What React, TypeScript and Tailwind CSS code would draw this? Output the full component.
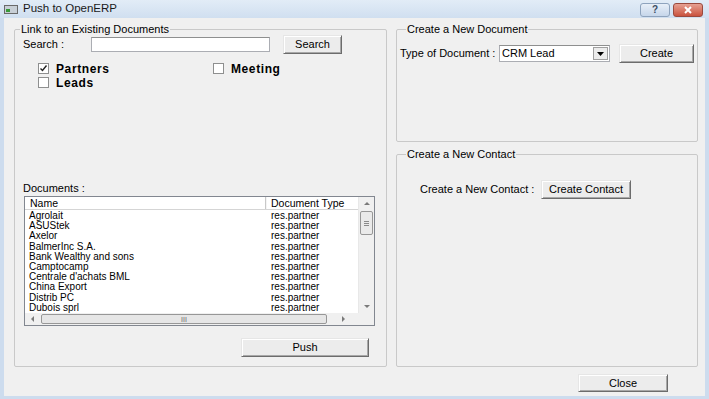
const FONT = "font-['Liberation_Sans',Arial,sans-serif]";

const ROWS = [
  "Agrolait",
  "ASUStek",
  "Axelor",
  "BalmerInc S.A.",
  "Bank Wealthy and sons",
  "Camptocamp",
  "Centrale d'achats BML",
  "China Export",
  "Distrib PC",
  "Dubois sprl",
];

// classic raised push button
function Btn({ w, h, children }: { w: string; h: string; children: React.ReactNode }) {
  return (
    <div
      className={`${w} ${h} flex items-center justify-center bg-[#ececec] border border-t-[#e6e6e6] border-l-[#e6e6e6] border-r-[#6c6c6c] border-b-[#6c6c6c] shadow-[inset_1px_1px_0_#ffffff,inset_-1px_-1px_0_#a8a8a8] text-[11px] text-black`}
    >
      {children}
    </div>
  );
}

function Check({ checked }: { checked?: boolean }) {
  return (
    <div className="w-[11px] h-[11px] border border-[#8e8f8f] bg-white flex items-center justify-center">
      {checked && (
        <svg width="9" height="9" viewBox="0 0 9 9">
          <path d="M1.5 4.5 L3.5 6.5 L7.5 1.5" stroke="#222" strokeWidth="1.4" fill="none" />
        </svg>
      )}
    </div>
  );
}

function Arrow({ dir }: { dir: "up" | "down" | "left" | "right" }) {
  const d = {
    up: "M1 5 L4 2 L7 5 Z",
    down: "M1 2 L4 5 L7 2 Z",
    left: "M5 1 L2 4 L5 7 Z",
    right: "M3 1 L6 4 L3 7 Z",
  }[dir];
  return (
    <svg width="8" height="8" viewBox="0 0 8 8">
      <path d={d} fill="#7a7a7a" />
    </svg>
  );
}

function DocumentList() {
  return (
    <div className="ml-[9px] mt-[2px] w-[351px] h-[130px] border border-[#828790] bg-white flex flex-col">
      <div className="flex flex-1 min-h-0">
        <div className="flex-1 flex flex-col">
          {/* header */}
          <div className="h-[13px] flex border-b border-[#d5d5d5] text-[10.5px] leading-[12px]">
            <div className="w-[241px] pl-[5px] border-r border-[#c8c8c8]">Name</div>
            <div className="pl-[4px] border-l border-[#f4f4f4]">Document Type</div>
          </div>
          <div className="flex flex-col pt-[1px]">
            {ROWS.map((name) => (
              <div key={name} className="h-[10.2px] flex text-[10px] leading-[10px]">
                <div className="w-[242px] pl-[4px]">{name}</div>
                <div className="pl-[4px]">res.partner</div>
              </div>
            ))}
          </div>
        </div>
        {/* vertical scrollbar */}
        <div className="w-[16px] bg-[#f0f0f0] flex flex-col items-center border-l border-[#e8e8e8]">
          <div className="h-[13px] flex items-center justify-center">
            <Arrow dir="up" />
          </div>
          <div className="mt-[1px] w-[13px] h-[24px] rounded-[2px] border border-[#979797] bg-[#eaeaea] flex flex-col items-center justify-center gap-[1px]">
            <div className="w-[5px] h-px bg-[#8a8a8a]" />
            <div className="w-[5px] h-px bg-[#8a8a8a]" />
            <div className="w-[5px] h-px bg-[#8a8a8a]" />
          </div>
          <div className="flex-1" />
          <div className="h-[13px] flex items-center justify-center">
            <Arrow dir="down" />
          </div>
        </div>
      </div>
      {/* horizontal scrollbar */}
      <div className="h-[12px] flex bg-[#f0f0f0]">
        <div className="w-[16px] flex items-center justify-center">
          <Arrow dir="left" />
        </div>
        <div className="w-[286px] my-[1px] rounded-[2px] border border-[#979797] bg-[#e6e6e6] flex items-center justify-center text-[7px] leading-none text-[#666]">
          III
        </div>
        <div className="flex-1 flex items-center justify-center">
          <Arrow dir="right" />
        </div>
        <div className="w-[16px] bg-[#f0f0f0]" />
      </div>
    </div>
  );
}

export default function App() {
  return (
    <div className={`${FONT} w-[709px] h-[399px] bg-[#cddcee] flex flex-col text-black overflow-hidden`}>
      {/* title bar */}
      <div className="h-[18px] flex items-center bg-gradient-to-b from-[#e2ecf7] to-[#d0dff0]">
        <div className="ml-[4px] w-[14px] h-[9px] border border-[#6a6a6a] bg-[#c8cfd6] flex items-end">
          <div className="ml-[1px] mb-[1px] w-[4px] h-[3px] bg-[#3a9a3a]" />
        </div>
        <div className="ml-[5px] text-[11.5px] leading-none text-[#1a1a1a]">Push to OpenERP</div>
        <div className="flex-1" />
        <div className="w-[30px] h-[14px] mt-[2px] rounded-[3px] border border-[#8ea3bd] bg-gradient-to-b from-[#e8eff8] to-[#c6d6ea] flex items-center justify-center text-[10px] leading-none font-bold text-[#3c4d63]">
          ?
        </div>
        <div className="ml-[3px] mr-[6px] w-[30px] h-[14px] mt-[2px] rounded-[3px] border border-[#9a4a3e] bg-gradient-to-b from-[#e6a092] to-[#c9523e] flex items-center justify-center">
          <svg width="10" height="8" viewBox="0 0 10 8">
            <path d="M2 1 L8 7 M8 1 L2 7" stroke="#ffffff" strokeWidth="2" />
          </svg>
        </div>
      </div>

      {/* client area */}
      <div className="flex-1 ml-[4px] mr-[4px] mb-[3px] bg-[#f0f0f0] flex flex-col text-[11px]">
        <div className="flex pl-[10px] pt-[5px] gap-[9px]">
          {/* left group */}
          <fieldset className="w-[373px] h-[344px] border border-[#c9c9c9] rounded-[2px] flex flex-col">
            <legend className="ml-[5px] px-[1px] h-[12px] leading-[12px] text-[11px]">Link to an Existing Documents</legend>
            <div className="flex items-center h-[19px]">
              <span className="ml-[8px] w-[68px]">Search :</span>
              <div className="w-[179px] h-[15px] border border-[#abadb3] border-t-[#8e8f8f] bg-white" />
              <div className="ml-[13px]">
                <Btn w="w-[59px]" h="h-[19px]">Search</Btn>
              </div>
            </div>
            <div className="mt-[9px] ml-[23px] grid grid-cols-[175px_auto] gap-y-[3px]">
              <div className="flex items-center gap-[7px] h-[11px]">
                <Check checked />
                <span className="font-bold text-[12px] tracking-[0.6px]">Partners</span>
              </div>
              <div className="flex items-center gap-[7px] h-[11px]">
                <Check />
                <span className="font-bold text-[12px] tracking-[0.6px]">Meeting</span>
              </div>
              <div className="flex items-center gap-[7px] h-[11px]">
                <Check />
                <span className="font-bold text-[12px] tracking-[0.6px]">Leads</span>
              </div>
            </div>
            <div className="mt-[94px] ml-[8px] h-[12px] leading-[12px]">Documents :</div>
            <DocumentList />
            <div className="mt-[12px] ml-[226px]">
              <Btn w="w-[128px]" h="h-[19px]">Push</Btn>
            </div>
          </fieldset>

          {/* right column */}
          <div className="w-[302px] flex flex-col gap-[6px]">
            <fieldset className="h-[119px] border border-[#c9c9c9] rounded-[2px] flex flex-col">
              <legend className="ml-[9px] px-[1px] h-[12px] leading-[12px] text-[11px]">Create a New Document</legend>
              <div className="mt-[9px] ml-[3px] flex items-center h-[19px]">
                <span className="w-[99px]">Type of Document :</span>
                <div className="w-[111px] h-[17px] border border-[#abadb3] border-t-[#8e8f8f] bg-white flex items-center">
                  <span className="flex-1 pl-[2px] text-[11px]">CRM Lead</span>
                  <div className="w-[15px] h-[13px] mr-[1px] border border-[#a0a0a0] bg-[#ececec] flex items-center justify-center">
                    <svg width="7" height="4" viewBox="0 0 7 4">
                      <path d="M0 0 L7 0 L3.5 4 Z" fill="#000" />
                    </svg>
                  </div>
                </div>
                <div className="ml-[9px]">
                  <Btn w="w-[75px]" h="h-[19px]">Create</Btn>
                </div>
              </div>
            </fieldset>
            <fieldset className="h-[219px] border border-[#c9c9c9] rounded-[2px] flex flex-col">
              <legend className="ml-[9px] px-[1px] h-[12px] leading-[12px] text-[11px]">Create a New Contact</legend>
              <div className="mt-[20px] ml-[23px] flex items-center h-[19px]">
                <span className="w-[121px]">Create a New Contact :</span>
                <Btn w="w-[90px]" h="h-[19px]">Create Contact</Btn>
              </div>
            </fieldset>
          </div>
        </div>

        <div className="mt-[7px] flex justify-end pr-[37px]">
          <Btn w="w-[90px]" h="h-[18px]">Close</Btn>
        </div>
      </div>
    </div>
  );
}
